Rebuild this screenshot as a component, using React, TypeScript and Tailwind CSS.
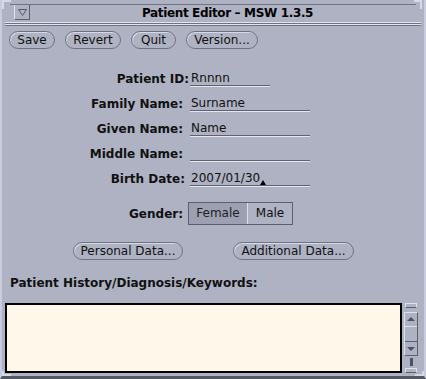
import { useState } from 'react'

const fields = [
  { label: 'Patient ID:', value: 'Rnnnn', width: 'w-[80px]', shift: 'mr-[-6px]' },
  { label: 'Family Name:', value: 'Surname', width: 'w-[120px]', shift: 'mr-0' },
  { label: 'Given Name:', value: 'Name', width: 'w-[120px]', shift: 'mr-0' },
  { label: 'Middle Name:', value: '', width: 'w-[120px]', shift: 'mr-0' },
  { label: 'Birth Date:', value: '2007/01/30', width: 'w-[120px]', shift: 'mr-[-2px]' },
]

function PillButton({ label, width }: { label: string; width: string }) {
  return (
    <button
      className={`${width} h-[18px] rounded-full border border-[#6f7281] shadow-[inset_1px_1px_0_#d6d9e6] bg-[#aeb2c3] text-[12px] leading-[16px] text-[#111] text-center`}
    >
      {label}
    </button>
  )
}

export default function App() {
  const [gender, setGender] = useState('female')

  return (
    <div className="relative w-[426px] h-[379px] bg-[#aeb2c3] flex flex-col border-l-2 border-r-2 border-l-[#c9ccdf] border-r-[#c9ccdf] border-b-[3px] border-b-[#545764] font-['DejaVu_Sans',sans-serif] text-[12px] text-[#111] overflow-hidden">
      {/* resize corners */}
      <div className="absolute left-0 top-0 w-[9px] h-[9px] border-l-2 border-t-2 border-[#d7d9e8]" />
      <div className="absolute right-[2px] top-0 w-[8px] h-[9px] border-r-2 border-t-2 border-[#d7d9e8]" />
      <div className="absolute left-0 bottom-0 w-[9px] h-[5px] border-l-2 border-b-2 border-[#d7d9e8]" />
      <div className="absolute right-0 bottom-0 w-[9px] h-[5px] border-r-2 border-b-2 border-[#d7d9e8]" />

      {/* title bar */}
      <div className="shrink-0 mt-[4px] mx-[8px] h-[18px] flex border-t border-[#707383]">
        <div className="ml-[4px] w-[16px] h-[15px] border border-t-0 border-l-[#e0e2ee] border-r-[#5c5f6d] border-b-[#5c5f6d] flex items-center justify-center">
          <svg width="9" height="7" viewBox="0 0 9 7">
            <path d="M0.5 0.5 H8.5 L4.5 6.5 Z" fill="none" stroke="#555866" strokeWidth="1" />
          </svg>
        </div>
        <div className="flex-1 pl-[9px] text-center font-bold text-[12px] leading-[16px] tracking-[-0.35px] text-black">
          Patient Editor – MSW 1.3.5
        </div>
      </div>
      <div className="shrink-0 mx-[3px] flex flex-col">
        <div className="h-px bg-[#e2e4ee]" />
        <div className="h-px bg-[#6f7282]" />
        <div className="h-px bg-[#e2e4ee]" />
        <div className="h-px bg-[#6f7282]" />
      </div>

      {/* command buttons */}
      <div className="shrink-0 mt-[5px] ml-[7px] flex gap-[10px]">
        <PillButton label="Save" width="w-[46px]" />
        <PillButton label="Revert" width="w-[56px]" />
        <PillButton label="Quit" width="w-[45px]" />
        <PillButton label="Version..." width="w-[72px]" />
      </div>

      {/* form */}
      <div className="shrink-0 mt-[17px] grid grid-cols-[181px_auto] gap-x-[7px]">
        {fields.map((f) => (
          <div key={f.label} className="contents">
            <div className={`h-[25px] flex items-center justify-end font-bold ${f.shift}`}>
              {f.label}
            </div>
            <div className="h-[25px] flex items-center">
              <div
                className={`${f.width} h-[15px] leading-[14px] pl-[1px] border-b border-[#5f6270] shadow-[0_1px_0_#e4e6f0]`}
              >
                {f.value}
                {f.label === 'Birth Date:' && (
                  <span className="inline-block align-bottom w-0 h-0 border-l-[3px] border-r-[3px] border-b-[5px] border-l-transparent border-r-transparent border-b-black" />
                )}
              </div>
            </div>
          </div>
        ))}
      </div>

      {/* gender */}
      <div className="shrink-0 mt-[11px] grid grid-cols-[181px_auto] gap-x-[5px] items-center">
        <div className="text-right font-bold">Gender:</div>
        <div className="flex h-[23px] w-fit border border-[#5c5f6d]">
          <button
            onClick={() => setGender('female')}
            className={`w-[59px] h-full border-r border-[#dcdfec] leading-[21px] text-[12px] ${
              gender === 'female' ? 'bg-[#9da0b2] text-[#222]' : 'bg-[#aeb2c3]'
            }`}
          >
            Female
          </button>
          <button
            onClick={() => setGender('male')}
            className={`w-[44px] h-full leading-[21px] text-[12px] ${
              gender === 'male' ? 'bg-[#9da0b2]' : 'bg-[#aeb2c3]'
            }`}
          >
            Male
          </button>
        </div>
      </div>

      {/* data buttons */}
      <div className="shrink-0 mt-[17px] ml-[71px] flex gap-[50px]">
        <PillButton label="Personal Data..." width="w-[110px]" />
        <PillButton label="Additional Data..." width="w-[121px]" />
      </div>

      <div className="shrink-0 mt-[16px] ml-[8px] h-[14px] leading-[14px] font-bold">
        Patient History/Diagnosis/Keywords:
      </div>

      {/* history text + scrollbar */}
      <div className="shrink-0 mt-[13px] ml-[3px] h-[70px] flex items-start gap-[2px]">
        <textarea className="block w-[397px] h-[70px] bg-[#fff7e9] border-2 border-black resize-none outline-none p-1 text-[12px]" />
        <div className="w-[14px] h-[70px] flex flex-col items-center">
          <div className="w-[12px] h-[5px] border border-[#dfe1ec] border-b-[#5c5f6d]" />
          <div className="mt-[4px] w-[14px] h-[45px] border border-t-[#dfe1ec] border-l-[#dfe1ec] border-r-[#5c5f6d] border-b-[#5c5f6d] flex flex-col">
            <div className="h-[14px] flex items-center justify-center border-b border-[#dfe1ec]">
              <div className="w-0 h-0 border-l-[4px] border-r-[4px] border-b-[4px] border-l-transparent border-r-transparent border-b-[#4e5160]" />
            </div>
            <div className="h-[15px] border-b border-[#5c5f6d]" />
            <div className="flex-1 flex items-center justify-center">
              <div className="w-0 h-0 border-l-[4px] border-r-[4px] border-t-[4px] border-l-transparent border-r-transparent border-t-[#4e5160]" />
            </div>
          </div>
          <div className="mt-[2px] w-[3px] h-[8px] bg-[#4e5160]" />
          <div className="mt-[2px] w-[12px] h-[5px] border border-[#dfe1ec] border-b-[#5c5f6d]" />
        </div>
      </div>
    </div>
  )
}
